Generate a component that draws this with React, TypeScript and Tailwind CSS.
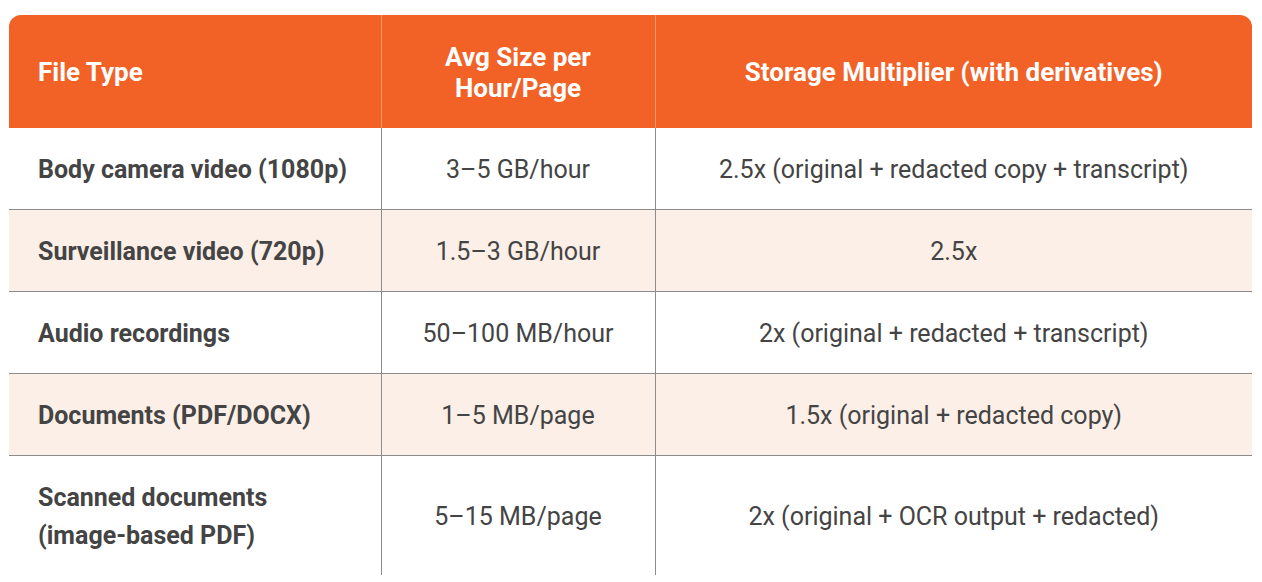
const rows = [
    { type: ['Body camera video (1080p)'], size: '3–5 GB/hour', mult: '2.5x (original + redacted copy + transcript)' },
    { type: ['Surveillance video (720p)'], size: '1.5–3 GB/hour', mult: '2.5x' },
    { type: ['Audio recordings'], size: '50–100 MB/hour', mult: '2x (original + redacted + transcript)' },
    { type: ['Documents (PDF/DOCX)'], size: '1–5 MB/page', mult: '1.5x (original + redacted copy)' },
    { type: ['Scanned documents', '(image-based PDF)'], size: '5–15 MB/page', mult: '2x (original + OCR output + redacted)' },
];

export default function App() {
    return (
        <div className="bg-white min-h-screen pt-[15px] pl-[9px] font-['Roboto',sans-serif]">
            <div className="w-[1243px] rounded-t-xl overflow-hidden">
                <table className="w-full table-fixed border-collapse">
                    <colgroup>
                        <col className="w-[372px]" />
                        <col className="w-[274px]" />
                        <col />
                    </colgroup>
                    <thead className="bg-[#f26227] text-white">
                        <tr>
                            <th className="h-[113px] pt-[2px] pl-[29px] text-left text-[26px] font-bold leading-[31px]">File Type</th>
                            <th className="h-[113px] pt-[2px] border-l border-[#f7976a] px-4 text-center text-[26px] font-bold leading-[31px]">
                                Avg Size per Hour/Page
                            </th>
                            <th className="h-[113px] pt-[2px] border-l border-[#f7976a] text-center text-[26px] font-bold leading-[31px]">
                                Storage Multiplier (with derivatives)
                            </th>
                        </tr>
                    </thead>
                    <tbody className="text-[25px] leading-[38px] text-[#444444]">
                        {rows.map((r, i) => (
                            <tr key={i} className={`${i % 2 === 1 ? 'bg-[#fcefe7]' : 'bg-white'} ${i < rows.length - 1 ? 'border-b border-[#8c8c8c]' : ''}`}>
                                <td className="pt-[23px] pb-[20px] pl-[29px] font-bold">
                                    {r.type.map(t => (
                                        <div key={t}>{t}</div>
                                    ))}
                                </td>
                                <td className="border-l border-[#8c8c8c] pt-[23px] pb-[20px] text-center">{r.size}</td>
                                <td className="border-l border-[#8c8c8c] pt-[23px] pb-[20px] text-center">{r.mult}</td>
                            </tr>
                        ))}
                    </tbody>
                </table>
            </div>
        </div>
    );
}
